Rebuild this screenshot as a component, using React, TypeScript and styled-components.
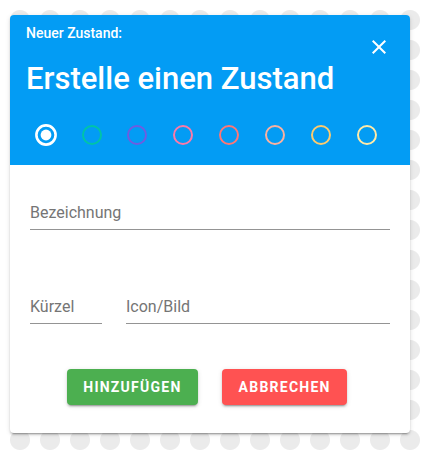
import styled, { createGlobalStyle } from "styled-components";

const GlobalStyle = createGlobalStyle`
  html, body {
    margin: 0;
    padding: 0;
  }
  body {
    font-family: Roboto, "Noto Sans", sans-serif;
    background-color: #fff;
    background-image: radial-gradient(circle, #ebebeb 9.5px, transparent 10.5px);
    background-size: 30px 30px;
    background-position: 5px 5px;
    min-height: 100vh;
  }
`;

const Page = styled.div`
  padding: 15px 18px 25px 10px;
`;

const Card = styled.div`
  width: 400px;
  background: #fff;
  border-radius: 4px;
  overflow: hidden;
  box-shadow: 0 3px 1px -2px rgba(0, 0, 0, 0.2), 0 2px 2px 0 rgba(0, 0, 0, 0.14),
    0 1px 5px 0 rgba(0, 0, 0, 0.12);
`;

const Header = styled.div`
  background: #039cf4;
  color: #fff;
  padding: 7.9px 19px 18px 16px;
  .top {
    display: flex;
    justify-content: space-between;
    align-items: flex-start;
  }
  .sub {
    font-size: 14px;
    line-height: 20px;
    font-weight: 500;
  }
  h1 {
    margin: 17.7px 0 0;
    font-size: 31px;
    line-height: 36px;
    font-weight: 500;
  }
`;

const CloseButton = styled.button`
  all: unset;
  width: 24px;
  height: 24px;
  margin-top: 12.1px;
  display: flex;
  align-items: center;
  justify-content: center;
  cursor: pointer;
`;

const ColorRow = styled.div`
  display: flex;
  gap: 21.85px;
  margin-top: 26.2px;
  padding-left: 7.7px;
`;

const Dot = styled.span`
  width: 24px;
  height: 24px;
  display: flex;
  cursor: pointer;
`;

const Body = styled.div`
  padding: 36.5px 20px 28px;
`;

const Row = styled.div<{ $gap?: number }>`
  display: flex;
  gap: 24px;
  margin-top: ${(p) => p.$gap ?? 0}px;
`;

const Field = styled.div<{ $width?: number }>`
  flex: ${(p) => (p.$width ? `0 0 ${p.$width}px` : "1 1 auto")};
  padding-bottom: 3.5px;
  border-bottom: 1px solid #949494;
  font-size: 16px;
  line-height: 24px;
  color: #757575;
`;

const Actions = styled.div`
  display: flex;
  justify-content: center;
  gap: 24px;
  margin-top: 45px;
  padding-right: 6px;
`;

const Button = styled.button<{ $color: string }>`
  all: unset;
  height: 36px;
  padding: 0 16.5px;
  background: ${(p) => p.$color};
  color: #fff;
  border-radius: 4px;
  font-family: Roboto, sans-serif;
  font-size: 14px;
  font-weight: 700;
  letter-spacing: 1.25px;
  text-transform: uppercase;
  display: flex;
  align-items: center;
  cursor: pointer;
  box-shadow: 0 3px 1px -2px rgba(0, 0, 0, 0.2), 0 2px 2px 0 rgba(0, 0, 0, 0.14),
    0 1px 5px 0 rgba(0, 0, 0, 0.12);
`;

const colors = ["#fff", "#00c4a7", "#6f5ce0", "#fd79a8", "#ff7675", "#fab1a0", "#fdcb6e", "#ffeaa7"];

const App = () => {
  return (
    <Page>
      <GlobalStyle />
      <Card>
        <Header>
          <div className="top">
            <div>
              <div className="sub">Neuer Zustand:</div>
              <h1>Erstelle einen Zustand</h1>
            </div>
            <CloseButton aria-label="close">
              <svg width="24" height="24" viewBox="0 0 24 24">
                <path
                  fill="#fff"
                  d="M19,6.41L17.59,5L12,10.59L6.41,5L5,6.41L10.59,12L5,17.59L6.41,19L12,13.41L17.59,19L19,17.59L13.41,12L19,6.41Z"
                />
              </svg>
            </CloseButton>
          </div>
          <ColorRow>
            {colors.map((c, i) => (
              <Dot key={c}>
                <svg width="24" height="24" viewBox="0 0 24 24">
                  {i === 0 ? (
                    <>
                      <circle cx="12" cy="12" r="9.6" fill="none" stroke={c} strokeWidth="2.6" />
                      <circle cx="12" cy="12" r="5.4" fill={c} />
                    </>
                  ) : (
                    <circle cx="12" cy="12" r="9" fill="none" stroke={c} strokeWidth="2" />
                  )}
                </svg>
              </Dot>
            ))}
          </ColorRow>
        </Header>
        <Body>
          <Row>
            <Field>Bezeichnung</Field>
          </Row>
          <Row $gap={65.5}>
            <Field $width={72}>Kürzel</Field>
            <Field>Icon/Bild</Field>
          </Row>
          <Actions>
            <Button $color="#4caf50">Hinzufügen</Button>
            <Button $color="#ff5252">Abbrechen</Button>
          </Actions>
        </Body>
      </Card>
    </Page>
  );
};

export default App;
